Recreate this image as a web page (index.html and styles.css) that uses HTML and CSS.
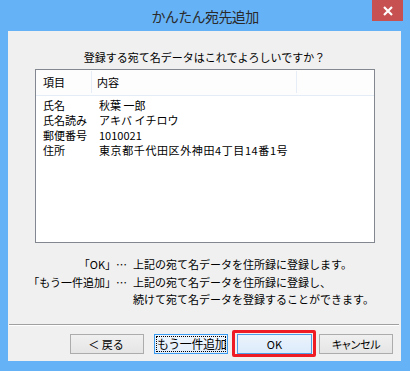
FILE: index.html
```html
<!DOCTYPE html>
<html lang="ja">
<head>
<meta charset="utf-8">
<link rel="stylesheet" href="styles.css">
</head>
<body>
<div class="window">
  <div class="titlebar">
    <span class="title">かんたん宛先追加</span>
    <div class="close-btn">
      <svg width="12" height="10" viewBox="0 0 12 10"><path d="M2 1 L10 9 M10 1 L2 9" stroke="#fff" stroke-width="2.2" fill="none"/></svg>
    </div>
  </div>
  <div class="client">
    <p class="question">登録する宛て名データはこれでよろしいですか？</p>
    <div class="listbox">
      <div class="list-header">
        <div class="hcell col1">項目</div>
        <div class="hcell col2">内容</div>
        <div class="hcell col3"></div>
      </div>
      <div class="list-body">
        <div class="row"><span class="label">氏名</span><span class="value">秋葉 一郎</span></div>
        <div class="row"><span class="label">氏名読み</span><span class="value">アキバ イチロウ</span></div>
        <div class="row"><span class="label">郵便番号</span><span class="value">1010021</span></div>
        <div class="row"><span class="label">住所</span><span class="value address">東京都千代田区外神田4丁目14番1号</span></div>
      </div>
    </div>
    <div class="notes">
      <span class="nlabel">「OK」…</span><span class="ntext">上記の宛て名データを住所録に登録します。</span>
      <span class="nlabel">「もう一件追加」…</span><span class="ntext">上記の宛て名データを住所録に登録し、</span>
      <span class="nlabel"></span><span class="ntext">続けて宛て名データを登録することができます。</span>
    </div>
    <div class="separator"></div>
    <div class="buttons">
      <button class="btn btn-back">＜ 戻る</button>
      <button class="btn btn-more"><span class="focus">もう一件追加</span></button>
      <div class="ok-wrap">
        <button class="btn btn-ok">OK</button>
        <div class="highlight"></div>
      </div>
      <button class="btn btn-cancel">キャンセル</button>
    </div>
  </div>
</div>
</body>
</html>
```

FILE: styles.css
```css
* { box-sizing: border-box; }
html, body { margin: 0; padding: 0; }
body {
  width: 410px;
  height: 371px;
  overflow: hidden;
  font-family: "Noto Sans CJK JP", "Noto Sans", sans-serif;
  font-size: 11px;
  color: #000;
}
.window {
  width: 410px;
  height: 371px;
  background: #66b2f7;
  padding: 0 9px 10px 8px;
  display: flex;
  flex-direction: column;
}
.titlebar {
  height: 31px;
  position: relative;
  display: flex;
  align-items: center;
  justify-content: center;
  margin: 0 -9px 0 -8px;
}
.title {
  font-size: 14px;
  letter-spacing: -0.6px;
  color: #2a2a2a;
  line-height: 16px;
  padding-top: 1px;
}
.close-btn {
  position: absolute;
  top: 0;
  left: 372px;
  width: 31px;
  height: 21px;
  background: #c75050;
  display: flex;
  align-items: center;
  justify-content: center;
  padding-top: 1px;
}
.client {
  flex: 1;
  background: #f0f0f0;
  display: flex;
  flex-direction: column;
}
.question {
  margin: 19px 0 0;
  height: 15px;
  line-height: 15px;
  text-align: center;
}
.listbox {
  margin: 4px 0 0 27px;
  width: 340px;
  height: 174px;
  border: 1px solid #828790;
  background: #fff;
}
.list-header {
  display: flex;
  height: 26px;
  border-bottom: 1px solid #e3ecf7;
  background: #fdfdfd;
}
.hcell {
  padding: 0 0 0 7px;
}
.col1 { width: 56px; border-right: 1px solid #e6edf6; margin: 1px 0 2px; line-height: 23px; }
.col2 { width: 205px; padding-left: 5px; border-right: 1px solid #e6edf6; margin: 1px 0 2px; line-height: 23px; }
.col3 { flex: 1; }
.list-body { padding-top: 2px; }
.row {
  display: flex;
  height: 15px;
  line-height: 15px;
}
.label { width: 62px; padding-left: 7px; white-space: nowrap; }
.value { white-space: nowrap; padding-left: 1px; }
.address { letter-spacing: 0.6px; }
.notes {
  margin-top: 13px;
  height: 53px;
  display: grid;
  grid-template-columns: 119px auto;
  column-gap: 6px;
  line-height: 17.5px;
  align-content: start;
}
.nlabel { text-align: right; white-space: nowrap; }
.ntext { white-space: nowrap; }
.separator {
  margin: 15px 2px 0 1px;
  height: 2px;
  border-top: 1px solid #a0a0a0;
  border-bottom: 1px solid #ffffff;
}
.buttons {
  margin-top: 8px;
  display: flex;
  align-items: flex-start;
  padding-left: 62px;
}
.btn {
  height: 20px;
  padding: 0;
  font-family: inherit;
  font-size: 11px;
  color: #000;
  border: 1px solid #acacac;
  background: linear-gradient(#f0f0f0, #e5e5e5);
  line-height: 17px;
  border-radius: 0;
}
.btn-back { width: 74px; padding-right: 2px; }
.btn-more {
  width: 74px;
  margin-left: 10px;
  border-color: #3c9df0;
  background: linear-gradient(#eef5fc, #e3eefa);
  padding: 1px;
}
.focus {
  display: block;
  height: 16px;
  border: 1px dotted #000;
  line-height: 14px;
  font-size: 12px;
  letter-spacing: -0.4px;
  white-space: nowrap;
}
.ok-wrap {
  position: relative;
  margin-left: 9px;
}
.btn-ok {
  width: 75px;
  display: block;
  border-color: #4f9de6;
  background: linear-gradient(#eaf3fc, #dcebfb);
}
.highlight {
  position: absolute;
  left: -5px;
  top: -4px;
  width: 84px;
  height: 27px;
  border: 3px solid #ee1b24;
  border-radius: 2px;
}
.btn-cancel {
  width: 74px;
  margin-left: 7px;
  font-feature-settings: "palt";
  letter-spacing: -0.3px;
}
```
